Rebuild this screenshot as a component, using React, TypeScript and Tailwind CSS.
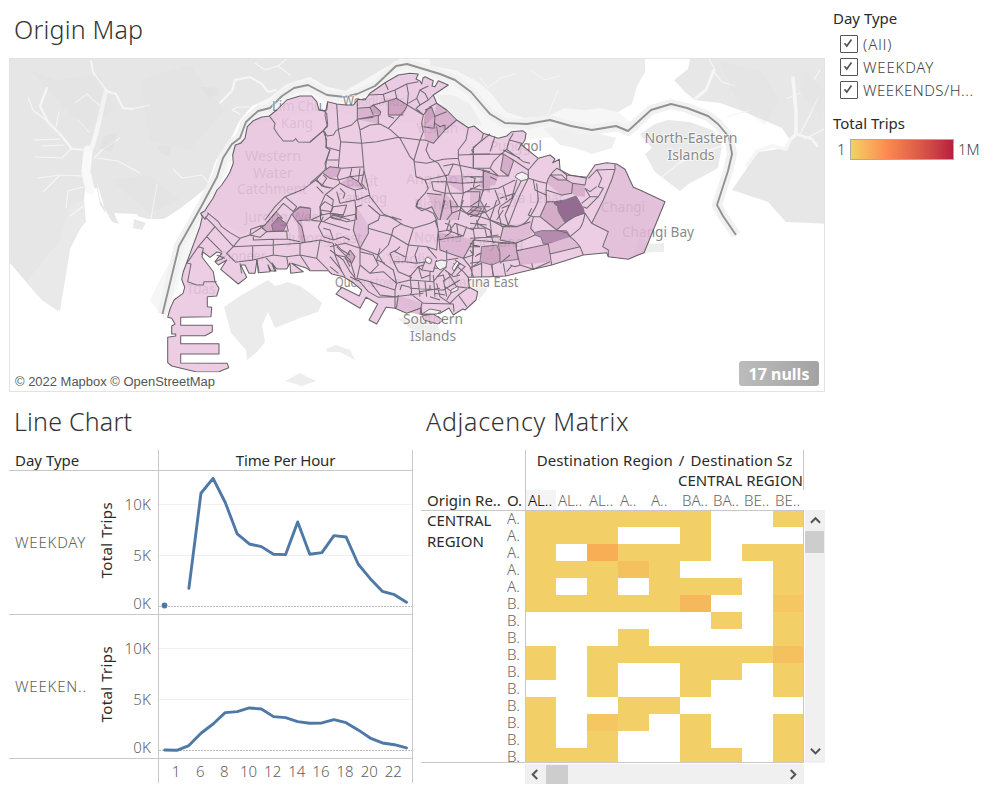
import React from "react";

const THIRD = 1 / 3;

const weekday: [number, number][] = [
  [2, 1.76], [3, 11.08], [4, 12.55], [5, 10.2], [6, 7.09], [7, 6.11], [8, 5.85], [9, 5.1], [10, 5.07], [11, 8.27],
  [12, 5.1], [13, 5.26], [14, 6.93], [15, 6.8], [16, 4.15], [17, 2.71], [18, 1.47], [19, 1.14], [20, 0.39],
];
const weekend: [number, number][] = [
  0.03, 0, 0.46, 1.67, 2.58, 3.69, 3.79, 4.15, 4.05, 3.3, 3.2, 2.81, 2.65, 2.68, 3.0, 2.71, 2.0, 1.2, 0.72, 0.55, 0.23,
].map((v, i) => [i, v]);

const cells = [
  "111111001", "111001000", "10d111011", "111b10001", "101011101", "11111c00a", "000000101", "000100001",
  "10111111b", "101001101", "001001001", "100110000", "10a101001", "101001001", "111001101",
];
const rowNames = "AAAAABBBBBBBBBB".split("");
const cellColor: Record<string, string> = {
  "0": "bg-white", "1": "bg-[#f3d067]", a: "bg-[#f4c763]", b: "bg-[#f5c15e]", c: "bg-[#f5b85c]", d: "bg-[#f7ae55]",
};
const columns: [string, string][] = [
  ["AL..", "w-[30px]"], ["AL..", "w-[31px]"], ["AL..", "w-[31px]"], ["A..", "w-[31px]"], ["A..", "w-[31px]"],
  ["BA..", "w-[31px]"], ["BA..", "w-[31px]"], ["BE..", "w-[31px]"], ["BE..", "w-[30px]"],
];

const ISLAND =
  "M167.7 317.3L170 309L174 300L183 293.3L184.7 287.3L181.7 279.3L183.3 271.7L187.7 260L200 226.7L202.3 216.7L200.7 213.3L205 210.7L207.3 206.7L213 198.3L217 190L221.7 185L227.3 176.7L230 172L233.3 163.3L232.7 155L235.3 145L240.7 143.3L245 138.3L247.3 126.7L253.3 120.7L262 117L269.3 116L276.7 110L286.7 100L300 96L311.7 96L316.7 101.7L319 110L322.7 110.7L326.7 110L327.7 101.7L336.7 104L345.7 105L353.3 105L358.3 99.3L365 100L370 93.3L385 82.7L398.3 75L410 73.3L418.3 74L416 79L420 81L421.7 84L423 78L425 76.7L433.3 80.7L432 86L435 86.7L438.3 80.7L448.3 85L433.3 95L436.7 103.3L446.7 110L456.7 120L468.3 127.7L474 126L483.3 133.3L498.3 138.3L506.7 136L511.7 131.7L522.7 130.7L526 133.3L525 140L521.7 145L538.3 158.3L550 155L555 159L552.7 162.7L559.3 159.3L560 169.3L566.7 175L586.7 177.3L595 165L606.7 162.7L616.7 164L625 169.3L633.3 187.3L640 190L665 201.7L644 252.7L638 255L628.3 259.3L608.3 256.7L606.7 252.7L583.3 255L551.7 265L533.3 269.3L516.7 273.3L505.7 276L490 276.7L468.3 277.3L469.3 287.3L477.7 291.7L476 300L465 310L463 309L458.3 311.7L453.3 315L449 308L440 313.3L421.7 315L421 308L406.7 313.3L395 308.3L386 307.3L376.7 324L369 320L377.7 304L366 297.3L360 308.3L336 294L341.7 287.3L359.3 296L361.7 290L351.7 281.7L343.3 276.7L331.7 274L328.3 270.7L310 270.7L306.7 268.3L291.7 263.3L303.3 271.7L290.7 273.3L290 263L286.7 269L276.7 269L272 263L276 271L271 271L268 265L270 271.7L258.3 272.7L257 260L255 273.3L249 273.3L245 265L240.7 265L246.7 277.3L238.3 284L220.7 269.3L226.7 260L218.3 265L215 261.7L221.7 253.3L217 252L210 257.3L203 252L202 257L213.3 271.7L215 281.7L219 288.3L216.7 296L207.3 296.7L207.3 306.7L211.7 307.3L211 316.7L180.7 317.3L180.7 325.3L212.3 325.3L212.3 331.7L205 335.7L180.7 335.7L180.7 343.7L219 343.7L219 354L180.7 354L180.7 363L227.3 363.3L228.7 367.7L218.3 372L196.7 372L171.7 366L167.7 362.7L167.7 337.3L175.7 336L175.7 334L171.7 334L171.7 326L175 324L171.7 318.3Z";

const CAUSEWAY =
  "M162.500 314L179 246L201 207L217 177L223 158L232 144L240 138L246 122L258 111L270 108L282 96L294 88L308 85L327 95L345 97L357 94L375 86L396 66L407 64L440 74L455 80L471 92L483 106L490 114L505 123L527 124L550 120L571 126L592 130L616 126L628 131L651 110L671 104L687 108L708 116L718 124L729 137L732 154L728 171L717 205L723 216L736 235";

type Sheet = { x: number; y: number; lines: string };
const boundaries: Sheet[] = [
  { x: 150, y: 60, lines: "M358 168L375 190L372 205L385 225L400 243L430 243L437 236L445 246L480 247L520 212L533 195L530 160L515 148M520 212L530 240L527 262L540 270L530 300L525 330L500 358L460 388L405 410L375 440L345 480M405 410L440 440L430 455M500 358L515 378L540 384M515 378L530 355L520 345" },
  { x: 310, y: 60, lines: "M53 125L45 165L52 200L40 212L0 245M80 132L85 210L92 245L87 300L85 325M40 212L52 228L70 225L78 212L85 208L125 195L142 178L190 172M45 215L50 262L88 272M142 118L142 178L150 210L155 250L162 330L180 410L220 462L260 480M92 245L155 250L200 245L265 232L330 240L345 240M150 210L180 195L210 192L240 208L270 235L300 290L315 305L350 310L400 298L445 295M235 205L285 150L292 135L340 165L335 190L340 215L330 240L312 300L318 350L345 360L355 385L345 400L322 425L318 440L335 452L365 440M142 145L180 142L190 135L212 155L210 165L142 178M180 142L190 165M175 105L220 103L255 90L290 72L325 65M220 103L225 125L190 135M255 90L260 115L292 135L295 100L290 72M225 125L260 115M235 122L235 165L280 165M205 165L205 192M235 168L252 175M225 68L235 90M295 130L320 115L330 90L355 78M320 115L330 135L355 120L370 105M330 90L345 100L355 120M330 135L318 145L340 165L360 140L380 130M345 150L365 142L375 170L372 205L340 200M372 170L410 155M375 190L390 200L405 195L405 210L370 250L345 240M380 200L385 235M405 210L440 180M475 203L468 240L445 270L445 295L455 340L460 400L445 480M540 222L490 262L490 325M445 285L540 282M355 248L348 270L360 295L385 310L410 355L405 400L390 480M400 318L430 312L490 325L540 335M365 365L410 365L455 370L520 365M430 312L415 345L345 360M365 365L370 390L405 400L460 400L510 375M412 370L420 400L445 440M350 400L395 405M365 440L385 480M465 395L510 395L505 440L475 465L450 440M420 440L500 440L540 440M520 330L520 395M460 350L520 350M0 370L40 335L60 320L95 325L162 320M40 340L60 355L85 360L120 350L162 345M50 300L87 300M60 268L45 310L50 330M92 325L82 350L90 370L70 385L45 405L30 440L32 480M15 360L45 380L70 385M90 370L110 380L135 390L160 385L145 365L120 350M125 325L120 350M150 325L145 365M135 390L140 420L180 405M80 395L90 430L135 420L140 480M50 405L70 420L65 455L30 450M60 460L100 470L140 462M100 415L105 400L90 385M162 330L155 370L170 390M20 380L40 400" },
  { x: 470, y: 100, lines: "M40 100L35 120L5 150L10 160M10 140L10 205M0 162L75 163L100 162L130 180L175 210M75 110L60 155M110 148L160 185L180 190M130 100L118 120L110 148L90 165L70 185L60 205L85 228M118 120L155 130M100 150L150 175M155 130L145 150M10 205L60 205M100 165L92 210L115 228L130 185L128 178M85 228L115 228M175 235L175 210L205 175M175 235Q205 245 230 250Q235 225 260 205L300 225L350 235M230 250L228 270L275 285L305 280L308 250L290 240L275 225L240 225M290 240L290 225M240 225L265 240L290 240M308 250L345 255L350 232M228 270L230 305L255 305M345 340Q340 370 330 385L300 410L293 400L260 390Q310 345 345 340L365 370L415 395L398 440L415 450L415 470M300 410Q320 425 330 440L340 465M330 440L240 462L245 495M240 462L235 432M140 452L235 432M140 452L150 495L190 508L240 485M185 490L190 508M140 452L138 430L195 405M190 350L182 385L193 398M190 350L210 350L230 305M210 350L260 390M175 235L150 285L115 375L140 380Q165 375 180 350Q200 320 205 300L200 250M155 240L130 290L105 345L115 375M190 240L195 270L228 285M185 325L175 345L190 350M140 240L125 295L90 320L85 335L95 380L115 375M95 325L118 315L105 345M345 265L360 290L335 310M380 208L395 235L385 260L400 265L385 290L350 325L340 320M345 265L360 275L380 260M360 290L385 290M355 235L380 210L435 208L435 192M435 208L425 240L400 300L365 370M0 265L40 270L85 265L135 240M40 270L30 300L0 320M30 300L50 335L90 310L75 270M50 335L0 350M45 335L60 360L100 380L90 420L140 430M100 380L140 380L182 365M90 295L135 280M100 260L110 300M0 385L45 385L50 410L85 405M20 360L25 385M0 370L50 375M0 415L90 410M30 440L0 430M30 485L0 490M65 495L70 528M100 490L107 528M0 505L30 485M40 208L40 265M0 230L15 235L10 262M60 230L80 240M35 210L85 228M0 330L45 335M60 360L65 405M120 495L135 500L150 495M110 515L125 498M10 430L10 465L0 450M15 470L30 460" },
  { x: 330, y: 200, lines: "M0 50L50 65L75 60L80 20L95 15M115 15L150 45L180 50L220 75L250 85L300 70L320 60M150 45L145 60L115 75L115 100L90 145L45 130L0 140M75 60L70 90L90 145L90 195L80 240M115 85L185 105L190 85L215 70M185 105L175 135L145 165L90 145M250 85L235 135L185 105M235 135L290 140L320 150L325 90L315 60M265 0L260 20L290 30L310 40L320 60L325 95L360 90L375 70L430 90L435 120M325 95L330 150L400 175L430 120L540 130M360 60L350 90L400 108L410 80M325 120L350 115L400 108M345 70L360 75L365 95L345 110M380 70L385 110M235 135L225 185L260 190L290 185M265 140L255 165L262 190M290 140L320 175M200 150L180 160L190 185L225 185M210 140L195 155L225 170M190 185L205 215L240 230L265 200L275 210L285 185M145 165L160 190L190 210L200 250L240 240L245 230M90 195L120 220L160 215L200 250M150 145L140 180L165 190M90 155L130 165L145 195L120 220M200 250L195 270L120 245L80 235M120 245L150 285L195 290L195 325M195 270L195 290L280 280M85 240L115 275L145 292L170 290L200 292M210 270L215 255L240 262M240 240L310 245L330 220L350 200M240 225L245 280M265 245L270 290M310 225L315 290M285 245L290 290M300 215L300 245M275 210L310 215L320 180M240 265L340 270L390 240M320 250L330 290L360 310M340 240L350 290M355 220L380 260L420 265M370 190L400 215L415 232M400 175L420 200L430 230M385 285L420 260M385 285L410 320M360 310L385 285M280 310L370 312L372 335M275 310L270 345M300 290L330 300M240 280L280 310M205 285L200 320L195 325M320 230L340 225L345 245M360 230L345 240M345 210L370 230L390 225M350 150L350 180L385 175M330 265L300 270M315 280L345 285M300 255L300 270L270 275M345 260L365 275L350 300M0 150L40 180L60 215L80 240M0 170L30 205L45 230M0 200L25 220M20 140L60 180L75 230M60 150L45 175L65 190L75 170L60 150M60 230L85 243M430 120L425 230M430 200L455 190L455 232M485 190L490 230M510 190L540 165M440 70L430 90M410 40L450 50L440 70L480 90L490 130M450 50L470 10M345 0L330 60M360 0L365 40L350 60M400 0L390 30L410 40M365 40L390 30M500 0L480 60L540 80M480 60L450 50M520 30L500 60M420 140L450 140M440 165L455 160M400 175L430 165M185 50L215 60M280 195L265 200L275 235L300 225M345 180L335 195M375 180L390 190L365 225M390 190L405 200L380 225M310 205L340 205" },
  { x: 150, y: 200, lines: "M155 45L165 58L175 42M172 38L205 65L215 80L240 98L270 115L300 105L345 75L400 10M165 50L195 80L250 140M195 80L170 110L145 140L110 190M170 110L215 155M250 140L230 160L255 185M145 140L160 145L155 165M113 190L123 192L113 245L140 255L160 255L162 245L200 245M270 115L250 140L310 137L370 135L450 130L510 120L550 130M310 110L310 120L370 118L415 118L450 125M308 137L308 180L255 187M308 180L370 165L370 118M370 165L410 170L450 165L450 130M450 165L500 175L510 120M300 105L330 112L350 95L410 93L412 118M300 105L302 88L330 78L350 95M425 42L410 72L415 95M482 60L520 65L600 90M400 10L430 35L450 20L480 25M440 62L455 80L465 125L450 130M450 165L460 180L480 210M410 170L415 200M500 175L535 210M550 130L555 165L575 215M520 50L505 80L520 110L550 120M482 60L515 45L510 20L525 5L550 20L540 40L515 45M550 20L590 15L580 45L540 40M520 65L550 45L600 60M520 85L540 90L550 120L580 110L600 120M555 130L575 150L600 165M555 165L585 170L600 200M270 190L275 220M320 180L327 215M365 190L375 215M345 170L365 192M195 185L220 175M200 165L225 175" },
];

const shaded: { x: number; y: number; d: string; fill: string; edge?: boolean }[] = [
  { x: 150, y: 60, d: "M358 168L375 190L372 205L385 225L400 243L430 243L437 236L445 246L480 247L520 212L530 240L527 262L540 270L530 300L525 330L500 358L460 388L405 410L375 440L330 485L280 525L240 500L172 450L172 440L190 415L215 375L232 350L250 310L248 285L256 255L285 235L292 200L310 182Z", fill: "#e7c2dd" },
  { x: 470, y: 100, d: "M435 208L435 192L465 208L490 262L510 270L585 305L522 458L475 478L415 470L415 450L398 440L415 395L365 370L400 300Z", fill: "#e0b7d5" },
  { x: 470, y: 100, d: "M230 305L255 305L265 335L285 368L260 390L210 350Z", fill: "#cd9fbf" },
  { x: 470, y: 100, d: "M255 305L285 300L318 288L340 325L343 340L310 350L285 368L265 335L262 318L253 312Z", fill: "#84557f", edge: true },
  { x: 470, y: 100, d: "M193 398L215 392L290 392L300 410L270 425L220 432L213 412L195 405Z", fill: "#a779a1", edge: true },
  { x: 470, y: 100, d: "M35 440L80 435L90 460L90 485L65 495L30 485Z", fill: "#c597b8", edge: true },
  { x: 470, y: 100, d: "M85 430L138 430L140 452L145 478L90 485L90 460Z", fill: "#cfa3c3", edge: true },
  { x: 470, y: 100, d: "M140 452L235 432L240 485L150 495Z", fill: "#d6a9ca" },
  { x: 470, y: 100, d: "M235 432L300 410L330 440L240 462Z", fill: "#dbb0cf" },
  { x: 470, y: 100, d: "M100 165L130 180L115 228L92 210Z", fill: "#cf9fc1" },
  { x: 470, y: 100, d: "M230 250L240 225L290 240L308 250L305 280L275 285Z", fill: "#d7aaca" },
  { x: 470, y: 100, d: "M308 250L345 255L345 290L318 288L305 280Z", fill: "#d1a3c4" },
  { x: 470, y: 100, d: "M40 208L85 228L75 255L40 262Z", fill: "#d3a7c7" },
  { x: 470, y: 100, d: "M0 265L40 270L30 300L50 335L0 350Z", fill: "#d9b0cf" },
  { x: 470, y: 100, d: "M100 380L182 365L193 398L138 430L90 420Z", fill: "#dbb1d0" },
  { x: 310, y: 60, d: "M235 125L260 115L292 135L280 165L235 165Z", fill: "#c997bb" },
  { x: 310, y: 60, d: "M142 145L180 142L205 165L205 192L142 178Z", fill: "#d4a8ca" },
  { x: 310, y: 60, d: "M180 142L190 135L212 155L210 165L190 160Z", fill: "#c393b5" },
  { x: 310, y: 60, d: "M345 150L365 142L375 170L372 205L340 200Z", fill: "#c493b6" },
  { x: 310, y: 60, d: "M372 170L380 130L410 150L440 180L405 210L370 250L345 240L340 200Z", fill: "#d4a6c9" },
  { x: 310, y: 60, d: "M60 320L92 325L82 350L60 355L40 340Z", fill: "#cfa0c2" },
  { x: 310, y: 60, d: "M90 370L120 350L145 365L160 385L110 380Z", fill: "#d3a7c9" },
  { x: 310, y: 60, d: "M520 330L540 335L540 400L510 380Z", fill: "#ce9fc1" },
  { x: 310, y: 60, d: "M415 345L455 345L460 400L412 370Z", fill: "#d7add0" },
  { x: 310, y: 60, d: "M350 400L405 400L445 440L445 480L385 480Z", fill: "#d9aece" },
  { x: 150, y: 200, d: "M345 75L378 35L398 55L385 52L365 75L370 93L350 95L330 78Z", fill: "#ca9bbd", edge: true },
  { x: 150, y: 200, d: "M365 75L385 52L410 72L400 93L370 93Z", fill: "#a4719c", edge: true },
  { x: 150, y: 200, d: "M425 42L450 22L482 25L480 60L440 62Z", fill: "#c795ba", edge: true },
  { x: 150, y: 200, d: "M440 62L455 65L467 125L450 125Z", fill: "#cf9fc1" },
  { x: 150, y: 200, d: "M540 40L580 45L570 60L545 55Z", fill: "#cfa0c2", edge: true },
  { x: 330, y: 200, d: "M60 150L45 175L65 190L75 170Z", fill: "#c999bc" },
  { x: 330, y: 200, d: "M325 95L435 120L400 175L330 150Z", fill: "#d7abcb" },
  { x: 330, y: 200, d: "M410 40L430 20L455 25L440 50Z", fill: "#c999bc", edge: true },
  { x: 330, y: 200, d: "M80 20L115 75L115 100L90 145L70 90L75 60Z", fill: "#dcb2d2" },
  { x: 330, y: 200, d: "M200 285L280 310L272 345L230 335L195 325Z", fill: "#dcb2d2" },
];

const labels: [number, number, string, number][] = [
  [297, 111, "Lim Chu", 50], [297, 128, "Kang", 32], [273, 161, "Western", 56], [273, 178, "Water", 40], [272, 194, "Catchment", 70],
  [284, 222, "Jurong West", 79], [243, 261, "Pioneer", 46], [201, 294, "Tuas", 29], [374, 106, "Woodlands", 62], [437, 133, "Yishun", 42],
  [362, 186, "Bukit", 32], [362, 203, "Panjang", 50], [444, 184, "Ang Mo Kio", 76], [436, 209, "Bishan", 44], [516, 151, "Punggol", 52],
  [530, 203, "Paya Lebar", 68], [623, 212, "Changi", 44], [658, 237, "Changi Bay", 72], [498, 247, "Geylang", 51], [438, 242, "Novena", 48],
  [410, 264, "Tanglin", 47], [368, 287, "Queenstown", 66], [483, 287, "Marina East", 71], [433, 324, "Southern", 60], [433, 341, "Islands", 46],
  [691, 143, "North-Eastern", 93], [691, 160, "Islands", 47], [325, 243, "Jurong East", 74],
];

function OriginMap() {
  return (
    <svg viewBox="9 57 817 335" className="block h-[335px] w-[817px]" fill="none">
      <defs>
        <filter id="soft" x="-5%" y="-5%" width="110%" height="110%"><feGaussianBlur stdDeviation="0.6" /></filter>
        <clipPath id="frame"><rect x="9" y="58" width="816" height="334" /></clipPath>
      </defs>
      <g clipPath="url(#frame)">
        <rect x="9" y="57" width="817" height="335" fill="#fff" />
        <g filter="url(#soft)">
          <path d="M0 50H640L618 112L640 130L520 140L330 110L250 125L205 215L165 320L150 300L200 200L260 100Z" fill="#f6f6f6" />
          <path d="M0 50H415L395 62L345 91L325 86L310 77L287 84L269 98L252 106L240 120L228 144L216 160L206 188L195 197L182 207L165 219L148 219L137 216L120 216L124 226L118 232L112 222L100 205L97 188L85 190L82 225L72 245L62 262L58 311L42 300L9 262H0Z" fill="#e6e6e6" />
          <path d="M84 200L86 222L72 238L60 311L42 300L26 282L60 240L70 205Z" fill="#e9e9e9" />
          <path d="M430 50H645V72L637 86L632 104L618 112L600 108L585 110L565 108L548 116L524 118L506 112L490 92L478 82L455 70L430 66Z" fill="#ebebeb" />
          <path d="M692 50H830V224L786 222L768 202L750 196L732 190L747 168L758 152L786 148L790 140L782 128L745 112L720 103L695 100L685 92L674 80L688 69Z" fill="#e7e7e7" />
          <path d="M640 134L655 124L668 120L690 122L714 131L722 146L718 168L700 178L690 183L680 191L668 182L655 172L645 154L652 148Z" fill="#e9e9e9" />
          <path d="M543 128L560 126L580 134L600 134L616 138L612 148L592 154L575 148L560 145Z" fill="#efefef" />
          <path d="M436 94L455 96L470 104L482 125L462 125L446 112Z" fill="#eeeeee" />
          <path d="M224 307L240 296L268 280L275 286L288 282L300 286L310 293L322 303L318 312L300 318L290 322L275 328L268 312L262 325L265 342L257 352L247 360L246 350L231 333Z" fill="#ebebeb" />
          <path d="M326 349L336 345L350 350L355 360L340 352L327 352ZM285 381L300 373L316 381L302 386ZM397 318L418 318L438 325L440 334L430 342L420 336ZM640 237L650 244L664 243V252L650 252L632 258Z" fill="#ededed" />
          <path d="M462 282L478 278L490 277L486 292L478 300L476 290Z" fill="#eeeeee" />
          <g stroke="#f6f6f6" strokeLinecap="round" strokeLinejoin="round">
            <path d="M88 150L86 172L90 190" strokeWidth="9" stroke="#f9f9f9" />
            <path d="M106 91C101 109 99 127 92 147" strokeWidth="4.500" />
            <path d="M90 150L72 149L60 134L48 122L40 106L47 88" strokeWidth="2.200" />
            <path d="M106 90L93 72L91 61M106 91L116 94L123 108L132 109" strokeWidth="2" />
            <path d="M99 105L87 94L75 103M89 132L78 120M94 158L102 150L120 138M97 158L118 161L140 173M60 139L34 140M63 145L42 146M71 149L62 158L35 157M83 176L60 175L38 178M60 175L43 192M83 187L68 191L66 208M85 205L70 216M48 122L33 110L28 97M56 127L59 112M173 169L182 178L202 175L208 182M157 184L151 219M240 114L232 110L238 107L249 107M132 109L150 105M255 63L265 70L278 66L290 75M289 57L278 66" strokeWidth="1.100" />
            <path d="M220 103L232 91L235 80L250 77L262 84L268 92L276 90" strokeWidth="2.200" />
            <path d="M479 104L488 88L480 78M488 88L500 78L515 74M548 115L558 90M530 70L545 80L560 76" strokeWidth="1" />
            <path d="M714 70L706 90L696 98" strokeWidth="3" />
            <path d="M708 57L714 68M714 72L722 82L735 86M727 117L740 113L751 110M788 98L800 93M820 70L814 80M799 136L810 115L818 98M805 139L824 129" strokeWidth="1.200" />
            <path d="M747 165L757 151L772 146L786 149L790 140L796 134L796 112L793 78" strokeWidth="3.500" />
            <path d="M796 134L812 139L817 146" strokeWidth="2.500" />
            <path d="M662 177L679 163L700 153L722 146" strokeWidth="1.500" />
          </g>
          <path d="M97 183C104 205 108 225 119 250L145 300L170 262L205 193L184 207L162 220L140 219L137 214L114 213L119 224L112 222L100 200Z" fill="#fff" />
          <path d="M134 219L146 223L142 230L133 228Z" fill="#e9e9e9" />
          <path d="M30 70L55 80L100 75L115 110L85 130ZM140 80L190 65L225 110L190 150L150 140ZM110 180L150 175L180 200L150 213Z" fill="#dedede" opacity=".15" />
          <path d="M103 137L118 132L112 151L101 149ZM157 145L171 147L170 156L161 154ZM200 87L218 88L219 95L208 97Z" fill="#dce0df" opacity=".5" />
          <path d="M720 62L760 70L780 100L765 125L740 108ZM805 70L824 90L820 115L800 90Z" fill="#dfdfdf" opacity=".25" />
        </g>
        <path d={CAUSEWAY} stroke="#f1f1f1" strokeWidth="10" strokeLinejoin="round" />
        <path d={CAUSEWAY} stroke="#929292" strokeWidth="1.900" strokeLinejoin="round" />
        <g className="font-['Noto_Sans']" fontSize="13.5" textAnchor="middle" fill="#8a8a8a" stroke="#fff" strokeOpacity=".6" strokeWidth="2" paintOrder="stroke">
          {labels.map(([x, y, t, w], i) => <text key={i} x={x} y={y} textLength={w} lengthAdjust="spacingAndGlyphs">{t}</text>)}
        </g>
        <g opacity=".86">
          <path d={ISLAND} fill="#eac5e0" />
          {shaded.map((s, i) => (
            <path key={i} d={s.d} fill={s.fill} stroke={s.edge ? "#6b626a" : "none"} strokeWidth="3" transform={`translate(${s.x} ${s.y}) scale(${THIRD})`} />
          ))}
          {boundaries.map((b, i) => (
            <path key={i} d={b.lines} transform={`translate(${b.x} ${b.y}) scale(${THIRD})`} stroke="#5a545a" strokeWidth="3.100" strokeLinejoin="round" />
          ))}
          <path d={ISLAND} stroke="#4f4a4e" strokeWidth="1.050" strokeLinejoin="round" />
          <path d="M422 316L433 314L443 320L438 324L424 320Z" fill="#e6bdd9" stroke="#625c61" strokeWidth="1" />
        </g>
        <g fill="#f0f1f0" stroke="#6b626a" strokeWidth=".9">
          <path d="M517 174L522 172L528 175L528 179L521 181L515 177Z" />
          <path d="M435 262L441 260L447 261L446 267L440 270L436 266Z" />
          <path d="M425 259L428 257L432 260L430 264L426 262ZM452 268L457 261L459 263L454 271ZM451 290L458 286L458 290L451 293ZM422 314L430 309L441 311L437 314Z" />
        </g>
        <rect x="10" y="372" width="209" height="19" fill="#fff" fillOpacity=".75" />
        <text x="15" y="386" fontSize="12" textLength="200" lengthAdjust="spacingAndGlyphs" className="font-['Liberation_Sans']" fill="#555">© 2022 Mapbox © OpenStreetMap</text>
      </g>
      <rect x="9.500" y="58.500" width="815" height="333" stroke="#e3e3e3" />
    </svg>
  );
}

function LinePlot({ data, dot }: { data: [number, number][]; dot?: boolean }) {
  const points = data.map(([i, v]) => `${5.7 + i * 12.09},${135.3 - v * 10.2}`).join(" ");
  return (
    <svg viewBox="0 0 253 143" className="block h-[143px] w-[253px]" fill="none">
      <path d="M0 33.500H253M0 84.500H253" stroke="#f0f0f0" />
      <path d="M0 135.500H253" stroke="#bdbdbd" strokeDasharray="2 1" />
      {dot && <circle cx="5.500" cy="134.500" r="2.900" fill="#4e79a7" />}
      <polyline points={points} stroke="#4e79a7" strokeWidth="2.900" strokeLinejoin="round" strokeLinecap="round" />
    </svg>
  );
}

function ChartRow({ name, data, dot }: { name: string; data: [number, number][]; dot?: boolean }) {
  return (
    <div className="flex h-[144px] border-b border-[#c8c8c8]">
      <div className="flex w-[86px] items-center pl-[6px] text-[15px] font-light tracking-[0.8px] text-[#606060]"><span>{name}</span></div>
      <div className="flex w-[22px] items-center justify-center pb-[4px]">
        <span className="-rotate-90 whitespace-nowrap text-[15px] tracking-[0.4px] text-[#2b2b2b]">Total Trips</span>
      </div>
      <div className="w-[41px] pr-[7px] pt-[22px] text-right text-[15px] leading-[22px] font-light tracking-[0.2px] text-[#606060]">
        <div className="h-[51px]">10K</div><div className="h-[48px]">5K</div><div>0K</div>
      </div>
      <div className="w-[255px] border-x border-[#c8c8c8]"><LinePlot data={data} dot={dot} /></div>
    </div>
  );
}

function Check({ label, spacing }: { label: string; spacing: string }) {
  return (
    <div className="flex h-[23px] items-center gap-[5px] pl-[7px]">
      <span className="flex h-[18px] w-[18px] shrink-0 items-center justify-center rounded-[1px] border border-[#555]">
        <svg viewBox="0 0 10 10" className="mr-[2px] mb-[2px] h-[10px] w-[10px]" fill="none"><path d="M1.500 5.200L3.800 8L8.500 1.500" stroke="#555" strokeWidth="1.700" /></svg>
      </span>
      <span className={`whitespace-nowrap text-[15px] font-light text-[#444] ${spacing}`}>{label}</span>
    </div>
  );
}

function Chevron({ d }: { d: string }) {
  return <svg viewBox="0 0 12 12" className="h-[11px] w-[11px]" fill="none"><path d={d} stroke="#555" strokeWidth="2.200" /></svg>;
}

function LineChart() {
  return (
    <section className="w-[404px]">
      <h2 className="h-[50px] pl-[5px] pt-[4px] text-[25px] leading-[34px] font-light tracking-[0.2px] text-[#333]">Line Chart</h2>
      <div className="flex h-[21px] border-b border-[#c8c8c8] text-[15px] leading-[20px] text-[#2b2b2b]">
        <div className="w-[149px] pl-[6px]">Day Type</div>
        <div className="w-[255px] border-x border-[#c8c8c8] text-center tracking-[-0.2px]">Time Per Hour</div>
      </div>
      <ChartRow name="WEEKDAY" data={weekday} dot />
      <ChartRow name="WEEKEN.." data={weekend} />
      <div className="flex h-[24px] pl-[149px]">
        <div className="flex w-[255px] border-x border-[#c8c8c8] pl-[5px] text-[15px] leading-[25px] font-light text-[#606060]">
          {["1", "6", "8", "10", "12", "14", "16", "18", "20", "22"].map((t) => <span key={t} className="w-[24.150px] shrink-0 text-center">{t}</span>)}
        </div>
      </div>
    </section>
  );
}

function Matrix() {
  return (
    <section className="w-[405px]">
      <h2 className="h-[50px] pl-[5px] pt-[4px] text-[25px] leading-[34px] font-light tracking-[0.7px] text-[#333]">Adjacency Matrix</h2>
      <div className="flex h-[61px] w-[383px] border-b border-[#c8c8c8] text-[15px] leading-[20px] text-[#2b2b2b]">
        <div className="flex w-[104px] items-end pl-[6px]"><span className="w-[80px] whitespace-nowrap">Origin Re..</span><span>O.</span></div>
        <div className="w-[279px] border-l border-[#c8c8c8]">
          <div className="h-[40px] border-r border-[#c8c8c8]">
            <div className="flex h-[20px] justify-center gap-[6px] whitespace-nowrap tracking-[0.1px]">
              <span>Destination Region</span><span>/</span><span>Destination Sz</span>
            </div>
            <div className="flex h-[20px] justify-end whitespace-nowrap">CENTRAL REGION</div>
          </div>
          <div className="flex h-[20px] text-[15px] font-light text-[#666]">
            {columns.map(([t, w], i) => (
              <span key={i} className={`${w} shrink-0 pl-[2px] whitespace-nowrap ${i === 0 ? "bg-[#f4f4f4] text-black" : ""}`}>{t}</span>
            ))}
          </div>
        </div>
      </div>
      <div className="flex h-[252px]">
        <div className="flex h-[252px] w-[383px] border-b border-[#c8c8c8]">
          <div className="-mt-px w-[86px] pl-[6px] text-[15px] leading-[21px] text-[#2b2b2b]">CENTRAL<br />REGION</div>
          <div className="-mt-px h-[252px] w-[18px] overflow-hidden text-[15px] leading-[17px] font-light text-[#666]">
            {rowNames.map((n, i) => <div key={i} className="h-[17px]">{n}.</div>)}
          </div>
          <div className="h-[251px] w-[279px] overflow-hidden border-x border-[#c8c8c8]">
            {cells.map((row, r) => (
              <div key={r} className={`flex ${r === 0 ? "h-[16px]" : "h-[17px]"}`}>
                {row.split("").map((c, i) => <span key={i} className={`${columns[i][1]} shrink-0 ${cellColor[c]}`} />)}
              </div>
            ))}
          </div>
        </div>
        <div className="-mt-px ml-px flex w-[20px] flex-col items-center justify-between bg-[#f0f0f0]">
          <div className="flex h-[21px] items-center"><Chevron d="M1 8.500L6 3.500L11 8.500" /></div>
          <div className="h-[22px] w-[19px] self-start bg-[#cdcdcd]" />
          <div className="flex-1" />
          <div className="flex h-[22px] items-center"><Chevron d="M1 2L6 7L11 2" /></div>
        </div>
      </div>
      <div className="mt-px ml-[104px] flex h-[20px] w-[279px] items-center bg-[#f0f0f0]">
        <span className="flex w-[21px] justify-center pr-[3px]"><Chevron d="M9 1L4 6L9 11" /></span>
        <span className="h-[19px] w-[22px] bg-[#cdcdcd]" />
        <span className="flex-1" />
        <span className="flex w-[21px] justify-center"><Chevron d="M3 1L8 6L3 11" /></span>
      </div>
    </section>
  );
}

export default function App() {
  return (
    <main className="flex h-[793px] w-[987px] overflow-hidden bg-white font-['Noto_Sans','Open_Sans',sans-serif]">
      <div className="w-[826px] shrink-0 pl-[9px]">
        <h1 className="h-[57px] pl-[5px] pt-[11px] text-[25px] leading-[36px] font-light tracking-[0.2px] text-[#333]">Origin Map</h1>
        <div className="relative h-[335px] w-[817px]">
          <OriginMap />
          <div className="absolute right-[7px] bottom-[6px] flex h-[25px] w-[80px] items-center justify-center rounded-[3px] bg-linear-to-r from-[#bcbcbc] to-[#a3a3a3] text-[16px] font-bold text-white">17 nulls</div>
        </div>
        <div className="mt-[8px] flex gap-[8px]"><LineChart /><Matrix /></div>
      </div>
      <aside className="w-[161px] pl-[7px] pt-[7px]">
        <div className="h-[25.500px] text-[15px] leading-[22px] text-[#2b2b2b]">Day Type</div>
        <Check label="(All)" spacing="tracking-[1px]" />
        <Check label="WEEKDAY" spacing="tracking-[0.8px]" />
        <Check label="WEEKENDS/H..." spacing="tracking-[0.5px]" />
        <div className="mt-[10.500px] h-[26px] text-[15px] leading-[22px] text-[#2b2b2b]">Total Trips</div>
        <div className="flex items-center text-[15px] leading-[22px] font-light text-[#444]">
          <span className="w-[17px] pl-[4px]">1</span>
          <span className="h-[21px] w-[104px] border border-[#aaa] bg-linear-to-r from-[#f3d067] via-[#fb8b4e] via-35% to-[#b71d3e]" />
          <span className="pl-[4px]">1M</span>
        </div>
      </aside>
    </main>
  );
}
